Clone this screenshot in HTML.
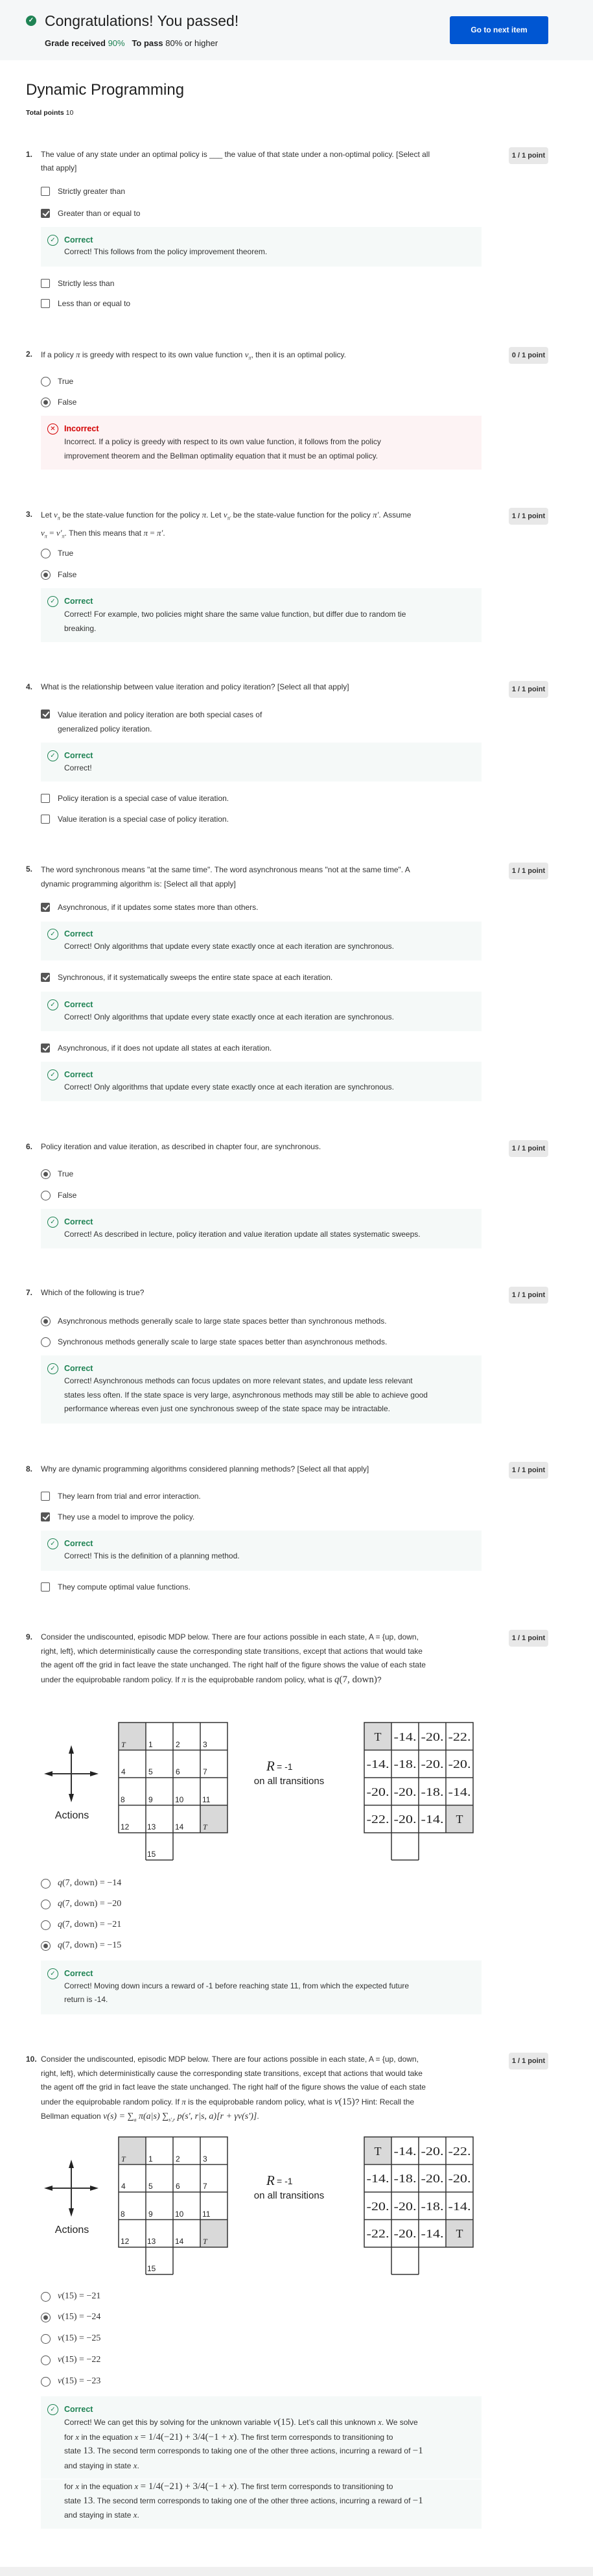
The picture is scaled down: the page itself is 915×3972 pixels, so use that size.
<!DOCTYPE html>
<html><head><meta charset="utf-8">
<style>
*{margin:0;padding:0;box-sizing:border-box}
body{width:915px;height:3972px;position:relative;background:#fff;font-family:"Liberation Sans",sans-serif;color:#333;overflow:hidden}
.a{position:absolute;white-space:nowrap}
.q{position:absolute;left:63px;font-size:12px;line-height:21px;white-space:nowrap;color:#333}
.n{position:absolute;left:40px;font-size:12px;line-height:21px;font-weight:bold;color:#333}
.b{position:absolute;left:785px;width:61px;height:26px;background:#e8e8e8;border-radius:4px;font-size:11px;font-weight:bold;line-height:26px;text-align:center;color:#333}
.o{position:absolute;left:89px;font-size:12px;line-height:20px;white-space:nowrap;color:#333}
.cb{position:absolute;left:63px;width:14px;height:14px;border:1.5px solid #555;border-radius:2px;background:#fff}
.cb.c{background:#555}
.cb.c:after{content:"";position:absolute;left:3.5px;top:0px;width:4px;height:8px;border:solid #fff;border-width:0 2px 2px 0;transform:rotate(40deg)}
.rd{position:absolute;left:63px;width:15px;height:15px;border:1.5px solid #555;border-radius:50%;background:#fff}
.rd.c:after{content:"";position:absolute;left:2.5px;top:2.5px;width:7px;height:7px;border-radius:50%;background:#555}
.fb{position:absolute;left:63px;width:680px;background:#f5f9f8}
.fb.x{background:#fdf3f4}
.ic{position:absolute;left:10px;width:17px;height:17px;border:1.3px solid #1f8354;border-radius:50%;color:#1f8354;font-size:10px;line-height:15px;text-align:center}
.x .ic{border-color:#d30001;color:#d30001}
.ft{position:absolute;left:36px;font-size:12.5px;font-weight:bold;color:#1f8354;line-height:20px}
.x .ft{color:#d30001}
.fx{position:absolute;left:36px;font-size:12px;line-height:21px;white-space:nowrap;color:#333}
.m{font-family:"Liberation Serif",serif;font-style:italic;font-size:13px}
.mr{font-family:"Liberation Serif",serif;font-size:13px}
.om{font-family:"Liberation Serif",serif;font-size:14px}
</style></head><body>

<!-- banner -->
<div class="a" style="left:0;top:0;width:915px;height:93px;background:#f5f7f8"></div>
<div class="a" style="left:40px;top:24px;width:16px;height:16px;border-radius:50%;background:#1f8354;color:#fff;font-size:10px;line-height:16px;text-align:center;font-weight:bold">✓</div>
<div class="a" style="left:69px;top:17px;font-size:23px;line-height:30px;color:#1f1f1f">Congratulations! You passed!</div>
<div class="a" style="left:69px;top:58px;font-size:13px;line-height:18px;color:#1f1f1f"><b>Grade received</b> <span style="color:#1f8354">90%</span> &nbsp; <b>To pass</b> 80% or higher</div>
<div class="a" style="left:694px;top:25px;width:152px;height:43px;background:#0056d2;border-radius:3px;color:#fff;font-size:12px;font-weight:bold;text-align:center;line-height:43px">Go to next item</div>

<div class="a" style="left:40px;top:124px;font-size:24px;line-height:30px;color:#1f1f1f">Dynamic Programming</div>
<div class="a" style="left:40px;top:166px;font-size:10.5px;line-height:16px;color:#1f1f1f"><b>Total points</b> 10</div>

<!-- Q1 -->
<div class="n" style="top:228px">1.</div>
<div class="q" style="top:228px">The value of any state under an optimal policy is ___ the value of that state under a non-optimal policy. [Select all<br>that apply]</div>
<div class="b" style="top:227px">1 / 1 point</div>
<div class="cb" style="top:288px"></div><div class="o" style="top:285px">Strictly greater than</div>
<div class="cb c" style="top:322px"></div><div class="o" style="top:319px">Greater than or equal to</div>
<div class="fb" style="top:350px;height:61px"><div class="ic" style="top:12px">✓</div><div class="ft" style="top:10px">Correct</div><div class="fx" style="top:28px">Correct! This follows from the policy improvement theorem.</div></div>
<div class="cb" style="top:430px"></div><div class="o" style="top:427px">Strictly less than</div>
<div class="cb" style="top:461px"></div><div class="o" style="top:458px">Less than or equal to</div>

<!-- Q2 -->
<div class="n" style="top:536px">2.</div>
<div class="q" style="top:536px">If a policy <span class="m">π</span> is greedy with respect to its own value function <span class="m">v<sub style="font-size:8px">π</sub></span>, then it is an optimal policy.</div>
<div class="b" style="top:535px">0 / 1 point</div>
<div class="rd" style="top:581px"></div><div class="o" style="top:578px">True</div>
<div class="rd c" style="top:613px"></div><div class="o" style="top:610px">False</div>
<div class="fb x" style="top:641px;height:83px"><div class="ic" style="top:12px">✕</div><div class="ft" style="top:10px">Incorrect</div><div class="fx" style="top:29px;line-height:22px">Incorrect. If a policy is greedy with respect to its own value function, it follows from the policy<br>improvement theorem and the Bellman optimality equation that it must be an optimal policy.</div></div>

<!-- Q3 -->
<div class="n" style="top:783px">3.</div>
<div class="q" style="top:783px;line-height:22px">Let <span class="m">v<sub style="font-size:8px">π</sub></span> be the state-value function for the policy <span class="m">π</span>. Let <span class="m">v<sub style="font-size:8px">π'</sub></span> be the state-value function for the policy <span class="m">π'</span>. Assume<br><span class="m">v<sub style="font-size:8px">π</sub></span> <span class="mr">=</span> <span class="m">v'<sub style="font-size:8px">π</sub></span>. Then this means that <span class="m">π</span> <span class="mr">=</span> <span class="m">π'</span>.</div>
<div class="b" style="top:783px">1 / 1 point</div>
<div class="rd" style="top:846px"></div><div class="o" style="top:843px">True</div>
<div class="rd c" style="top:879px"></div><div class="o" style="top:876px">False</div>
<div class="fb" style="top:907px;height:83px"><div class="ic" style="top:12px">✓</div><div class="ft" style="top:10px">Correct</div><div class="fx" style="top:29px;line-height:22px">Correct! For example, two policies might share the same value function, but differ due to random tie<br>breaking.</div></div>

<!-- Q4 -->
<div class="n" style="top:1049px">4.</div>
<div class="q" style="top:1049px">What is the relationship between value iteration and policy iteration? [Select all that apply]</div>
<div class="b" style="top:1050px">1 / 1 point</div>
<div class="cb c" style="top:1094px"></div><div class="o" style="top:1091px;line-height:22px">Value iteration and policy iteration are both special cases of<br>generalized policy iteration.</div>
<div class="fb" style="top:1145px;height:60px"><div class="ic" style="top:12px">✓</div><div class="ft" style="top:10px">Correct</div><div class="fx" style="top:29px">Correct!</div></div>
<div class="cb" style="top:1224px"></div><div class="o" style="top:1221px">Policy iteration is a special case of value iteration.</div>
<div class="cb" style="top:1256px"></div><div class="o" style="top:1253px">Value iteration is a special case of policy iteration.</div>

<!-- Q5 -->
<div class="n" style="top:1330px">5.</div>
<div class="q" style="top:1330px;line-height:22px">The word synchronous means "at the same time". The word asynchronous means "not at the same time". A<br>dynamic programming algorithm is: [Select all that apply]</div>
<div class="b" style="top:1330px">1 / 1 point</div>
<div class="cb c" style="top:1392px"></div><div class="o" style="top:1389px">Asynchronous, if it updates some states more than others.</div>
<div class="fb" style="top:1421px;height:60px"><div class="ic" style="top:11px">✓</div><div class="ft" style="top:9px">Correct</div><div class="fx" style="top:28px">Correct! Only algorithms that update every state exactly once at each iteration are synchronous.</div></div>
<div class="cb c" style="top:1500px"></div><div class="o" style="top:1497px">Synchronous, if it systematically sweeps the entire state space at each iteration.</div>
<div class="fb" style="top:1529px;height:61px"><div class="ic" style="top:12px">✓</div><div class="ft" style="top:10px">Correct</div><div class="fx" style="top:29px">Correct! Only algorithms that update every state exactly once at each iteration are synchronous.</div></div>
<div class="cb c" style="top:1609px"></div><div class="o" style="top:1606px">Asynchronous, if it does not update all states at each iteration.</div>
<div class="fb" style="top:1637px;height:61px"><div class="ic" style="top:12px">✓</div><div class="ft" style="top:10px">Correct</div><div class="fx" style="top:29px">Correct! Only algorithms that update every state exactly once at each iteration are synchronous.</div></div>

<!-- Q6 -->
<div class="n" style="top:1758px">6.</div>
<div class="q" style="top:1758px">Policy iteration and value iteration, as described in chapter four, are synchronous.</div>
<div class="b" style="top:1758px">1 / 1 point</div>
<div class="rd c" style="top:1803px"></div><div class="o" style="top:1800px">True</div>
<div class="rd" style="top:1836px"></div><div class="o" style="top:1833px">False</div>
<div class="fb" style="top:1864px;height:61px"><div class="ic" style="top:12px">✓</div><div class="ft" style="top:10px">Correct</div><div class="fx" style="top:29px">Correct! As described in lecture, policy iteration and value iteration update all states systematic sweeps.</div></div>

<!-- Q7 -->
<div class="n" style="top:1983px">7.</div>
<div class="q" style="top:1983px">Which of the following is true?</div>
<div class="b" style="top:1984px">1 / 1 point</div>
<div class="rd c" style="top:2030px"></div><div class="o" style="top:2027px">Asynchronous methods generally scale to large state spaces better than synchronous methods.</div>
<div class="rd" style="top:2062px"></div><div class="o" style="top:2059px">Synchronous methods generally scale to large state spaces better than asynchronous methods.</div>
<div class="fb" style="top:2090px;height:105px"><div class="ic" style="top:12px">✓</div><div class="ft" style="top:10px">Correct</div><div class="fx" style="top:29px;line-height:21.5px">Correct! Asynchronous methods can focus updates on more relevant states, and update less relevant<br>states less often. If the state space is very large, asynchronous methods may still be able to achieve good<br>performance whereas even just one synchronous sweep of the state space may be intractable.</div></div>

<!-- Q8 -->
<div class="n" style="top:2255px">8.</div>
<div class="q" style="top:2255px">Why are dynamic programming algorithms considered planning methods? [Select all that apply]</div>
<div class="b" style="top:2254px">1 / 1 point</div>
<div class="cb" style="top:2300px"></div><div class="o" style="top:2297px">They learn from trial and error interaction.</div>
<div class="cb c" style="top:2332px"></div><div class="o" style="top:2329px">They use a model to improve the policy.</div>
<div class="fb" style="top:2360px;height:62px"><div class="ic" style="top:12px">✓</div><div class="ft" style="top:10px">Correct</div><div class="fx" style="top:29px">Correct! This is the definition of a planning method.</div></div>
<div class="cb" style="top:2440px"></div><div class="o" style="top:2437px">They compute optimal value functions.</div>

<!-- Q9 -->
<div class="n" style="top:2514px">9.</div>
<div class="q" style="top:2514px;line-height:21.7px">Consider the undiscounted, episodic MDP below. There are four actions possible in each state, A = {up, down,<br>right, left}, which deterministically cause the corresponding state transitions, except that actions that would take<br>the agent off the grid in fact leave the state unchanged. The right half of the figure shows the value of each state<br>under the equiprobable random policy. If <span class="m">π</span> is the equiprobable random policy, what is <span class="m" style="font-size:15px">q</span><span class="mr" style="font-size:15px">(7, down)</span>?</div>
<div class="b" style="top:2513px">1 / 1 point</div>

<svg class="a" style="left:0;top:2596px" width="915" height="280" viewBox="0 0 915 280">
<g stroke="#333" fill="none" stroke-width="1.5">
<rect x="183" y="60" width="42" height="42.5" fill="#d9d9d9" stroke="none"/>
<rect x="309" y="187.5" width="42" height="42.5" fill="#d9d9d9" stroke="none"/>
<rect x="183" y="60" width="168" height="170"/>
<line x1="225" y1="60" x2="225" y2="272"/><line x1="267" y1="60" x2="267" y2="272"/><line x1="309" y1="60" x2="309" y2="230"/>
<line x1="183" y1="102.5" x2="351" y2="102.5"/><line x1="183" y1="145" x2="351" y2="145"/><line x1="183" y1="187.5" x2="351" y2="187.5"/>
<line x1="225" y1="272" x2="267" y2="272"/>
<rect x="562" y="60" width="42" height="42.5" fill="#d9d9d9" stroke="none"/>
<rect x="688" y="187.5" width="42" height="42.5" fill="#d9d9d9" stroke="none"/>
<rect x="562" y="60" width="168" height="170"/>
<line x1="604" y1="60" x2="604" y2="272"/><line x1="646" y1="60" x2="646" y2="272"/><line x1="688" y1="60" x2="688" y2="230"/>
<line x1="562" y1="102.5" x2="730" y2="102.5"/><line x1="562" y1="145" x2="730" y2="145"/><line x1="562" y1="187.5" x2="730" y2="187.5"/>
<line x1="604" y1="272" x2="646" y2="272"/>
<line x1="110" y1="104" x2="110" y2="174" stroke-width="2"/><line x1="77" y1="139" x2="143" y2="139" stroke-width="2"/>
</g>
<g fill="#222"><polygon points="110,95 106,108 114,108"/><polygon points="110,183 106,170 114,170"/><polygon points="68,139 81,135 81,143"/><polygon points="152,139 139,135 139,143"/></g>
<g font-family="Liberation Sans,sans-serif" font-size="12" fill="#222">
<text x="187" y="98" font-family="Liberation Serif,serif" font-style="italic">T</text><text x="229" y="98">1</text><text x="271" y="98">2</text><text x="313" y="98">3</text>
<text x="187" y="140">4</text><text x="229" y="140">5</text><text x="271" y="140">6</text><text x="313" y="140">7</text>
<text x="186" y="183">8</text><text x="229" y="183">9</text><text x="270" y="183">10</text><text x="312" y="183">11</text>
<text x="186" y="225">12</text><text x="227" y="225">13</text><text x="270" y="225">14</text><text x="313" y="225" font-family="Liberation Serif,serif" font-style="italic">T</text>
<text x="227" y="267">15</text>
<text x="111" y="208" font-size="16" text-anchor="middle">Actions</text>
<text x="411" y="134" font-size="21" font-family="Liberation Serif,serif" font-style="italic">R</text><text x="427" y="133" font-size="14">= -1</text>
<text x="446" y="155" font-size="15" text-anchor="middle">on all transitions</text>
</g>
<g font-family="Liberation Serif,serif" font-size="18" fill="#222" text-anchor="middle">
<text x="583" y="88">T</text><text x="625" y="88" textLength="35" lengthAdjust="spacingAndGlyphs">-14.</text><text x="667" y="88" textLength="35" lengthAdjust="spacingAndGlyphs">-20.</text><text x="709" y="88" textLength="35" lengthAdjust="spacingAndGlyphs">-22.</text>
<text x="583" y="130" textLength="35" lengthAdjust="spacingAndGlyphs">-14.</text><text x="625" y="130" textLength="35" lengthAdjust="spacingAndGlyphs">-18.</text><text x="667" y="130" textLength="35" lengthAdjust="spacingAndGlyphs">-20.</text><text x="709" y="130" textLength="35" lengthAdjust="spacingAndGlyphs">-20.</text>
<text x="583" y="173" textLength="35" lengthAdjust="spacingAndGlyphs">-20.</text><text x="625" y="173" textLength="35" lengthAdjust="spacingAndGlyphs">-20.</text><text x="667" y="173" textLength="35" lengthAdjust="spacingAndGlyphs">-18.</text><text x="709" y="173" textLength="35" lengthAdjust="spacingAndGlyphs">-14.</text>
<text x="583" y="215" textLength="35" lengthAdjust="spacingAndGlyphs">-22.</text><text x="625" y="215" textLength="35" lengthAdjust="spacingAndGlyphs">-20.</text><text x="667" y="215" textLength="35" lengthAdjust="spacingAndGlyphs">-14.</text><text x="709" y="215">T</text>
</g>
</svg>

<div class="rd" style="top:2897px"></div><div class="o om" style="top:2894px"><i>q</i>(7, down) = −14</div>
<div class="rd" style="top:2929px"></div><div class="o om" style="top:2926px"><i>q</i>(7, down) = −20</div>
<div class="rd" style="top:2961px"></div><div class="o om" style="top:2958px"><i>q</i>(7, down) = −21</div>
<div class="rd c" style="top:2993px"></div><div class="o om" style="top:2990px"><i>q</i>(7, down) = −15</div>
<div class="fb" style="top:3023px;height:83px"><div class="ic" style="top:12px">✓</div><div class="ft" style="top:10px">Correct</div><div class="fx" style="top:29px">Correct! Moving down incurs a reward of -1 before reaching state 11, from which the expected future<br>return is -14.</div></div>

<!-- Q10 -->
<div class="n" style="top:3165px">10.</div>
<div class="q" style="top:3165px;line-height:21.7px">Consider the undiscounted, episodic MDP below. There are four actions possible in each state, A = {up, down,<br>right, left}, which deterministically cause the corresponding state transitions, except that actions that would take<br>the agent off the grid in fact leave the state unchanged. The right half of the figure shows the value of each state<br>under the equiprobable random policy. If <span class="m">π</span> is the equiprobable random policy, what is <span class="m" style="font-size:15px">v</span><span class="mr" style="font-size:15px">(15)</span>? Hint: Recall the<br>Bellman equation <span class="m" style="font-size:14px">v(s) = ∑<sub style="font-size:8px">a</sub> π(a|s) ∑<sub style="font-size:8px">s',r</sub> p(s', r|s, a)[r + γv(s')]</span>.</div>
<div class="b" style="top:3165px">1 / 1 point</div>

<svg class="a" style="left:0;top:3235px" width="915" height="280" viewBox="0 0 915 280">
<g stroke="#333" fill="none" stroke-width="1.5">
<rect x="183" y="60" width="42" height="42.5" fill="#d9d9d9" stroke="none"/>
<rect x="309" y="187.5" width="42" height="42.5" fill="#d9d9d9" stroke="none"/>
<rect x="183" y="60" width="168" height="170"/>
<line x1="225" y1="60" x2="225" y2="272"/><line x1="267" y1="60" x2="267" y2="272"/><line x1="309" y1="60" x2="309" y2="230"/>
<line x1="183" y1="102.5" x2="351" y2="102.5"/><line x1="183" y1="145" x2="351" y2="145"/><line x1="183" y1="187.5" x2="351" y2="187.5"/>
<line x1="225" y1="272" x2="267" y2="272"/>
<rect x="562" y="60" width="42" height="42.5" fill="#d9d9d9" stroke="none"/>
<rect x="688" y="187.5" width="42" height="42.5" fill="#d9d9d9" stroke="none"/>
<rect x="562" y="60" width="168" height="170"/>
<line x1="604" y1="60" x2="604" y2="272"/><line x1="646" y1="60" x2="646" y2="272"/><line x1="688" y1="60" x2="688" y2="230"/>
<line x1="562" y1="102.5" x2="730" y2="102.5"/><line x1="562" y1="145" x2="730" y2="145"/><line x1="562" y1="187.5" x2="730" y2="187.5"/>
<line x1="604" y1="272" x2="646" y2="272"/>
<line x1="110" y1="104" x2="110" y2="174" stroke-width="2"/><line x1="77" y1="139" x2="143" y2="139" stroke-width="2"/>
</g>
<g fill="#222"><polygon points="110,95 106,108 114,108"/><polygon points="110,183 106,170 114,170"/><polygon points="68,139 81,135 81,143"/><polygon points="152,139 139,135 139,143"/></g>
<g font-family="Liberation Sans,sans-serif" font-size="12" fill="#222">
<text x="187" y="98" font-family="Liberation Serif,serif" font-style="italic">T</text><text x="229" y="98">1</text><text x="271" y="98">2</text><text x="313" y="98">3</text>
<text x="187" y="140">4</text><text x="229" y="140">5</text><text x="271" y="140">6</text><text x="313" y="140">7</text>
<text x="186" y="183">8</text><text x="229" y="183">9</text><text x="270" y="183">10</text><text x="312" y="183">11</text>
<text x="186" y="225">12</text><text x="227" y="225">13</text><text x="270" y="225">14</text><text x="313" y="225" font-family="Liberation Serif,serif" font-style="italic">T</text>
<text x="227" y="267">15</text>
<text x="111" y="208" font-size="16" text-anchor="middle">Actions</text>
<text x="411" y="134" font-size="21" font-family="Liberation Serif,serif" font-style="italic">R</text><text x="427" y="133" font-size="14">= -1</text>
<text x="446" y="155" font-size="15" text-anchor="middle">on all transitions</text>
</g>
<g font-family="Liberation Serif,serif" font-size="18" fill="#222" text-anchor="middle">
<text x="583" y="88">T</text><text x="625" y="88" textLength="35" lengthAdjust="spacingAndGlyphs">-14.</text><text x="667" y="88" textLength="35" lengthAdjust="spacingAndGlyphs">-20.</text><text x="709" y="88" textLength="35" lengthAdjust="spacingAndGlyphs">-22.</text>
<text x="583" y="130" textLength="35" lengthAdjust="spacingAndGlyphs">-14.</text><text x="625" y="130" textLength="35" lengthAdjust="spacingAndGlyphs">-18.</text><text x="667" y="130" textLength="35" lengthAdjust="spacingAndGlyphs">-20.</text><text x="709" y="130" textLength="35" lengthAdjust="spacingAndGlyphs">-20.</text>
<text x="583" y="173" textLength="35" lengthAdjust="spacingAndGlyphs">-20.</text><text x="625" y="173" textLength="35" lengthAdjust="spacingAndGlyphs">-20.</text><text x="667" y="173" textLength="35" lengthAdjust="spacingAndGlyphs">-18.</text><text x="709" y="173" textLength="35" lengthAdjust="spacingAndGlyphs">-14.</text>
<text x="583" y="215" textLength="35" lengthAdjust="spacingAndGlyphs">-22.</text><text x="625" y="215" textLength="35" lengthAdjust="spacingAndGlyphs">-20.</text><text x="667" y="215" textLength="35" lengthAdjust="spacingAndGlyphs">-14.</text><text x="709" y="215">T</text>
</g>
</svg>

<div class="rd" style="top:3534px"></div><div class="o om" style="top:3531px"><i>v</i>(15) = −21</div>
<div class="rd c" style="top:3566px"></div><div class="o om" style="top:3563px"><i>v</i>(15) = −24</div>
<div class="rd" style="top:3599px"></div><div class="o om" style="top:3596px"><i>v</i>(15) = −25</div>
<div class="rd" style="top:3632px"></div><div class="o om" style="top:3629px"><i>v</i>(15) = −22</div>
<div class="rd" style="top:3665px"></div><div class="o om" style="top:3662px"><i>v</i>(15) = −23</div>
<div class="fb" style="top:3695px;height:204px">
<div class="ic" style="top:12px">✓</div><div class="ft" style="top:10px">Correct</div>
<div class="fx" style="top:29px;line-height:21.7px">Correct! We can get this by solving for the unknown variable <span class="mr" style="font-size:15px"><i>v</i>(15)</span>. Let’s call this unknown <span class="m">x</span>. We solve<br>for <span class="m">x</span> in the equation <span class="m">x</span> <span class="mr" style="font-size:15px">= 1/4(−21) + 3/4(−1 + <i>x</i>)</span>. The first term corresponds to transitioning to<br>state <span class="mr" style="font-size:15px">13</span>. The second term corresponds to taking one of the other three actions, incurring a reward of <span class="mr" style="font-size:15px">−1</span><br>and staying in state <span class="m">x</span>.</div>
<div class="a" style="left:0;top:127px;width:680px;height:1px;background:#fff"></div>
<div class="fx" style="top:128px;line-height:21.7px">for <span class="m">x</span> in the equation <span class="m">x</span> <span class="mr" style="font-size:15px">= 1/4(−21) + 3/4(−1 + <i>x</i>)</span>. The first term corresponds to transitioning to<br>state <span class="mr" style="font-size:15px">13</span>. The second term corresponds to taking one of the other three actions, incurring a reward of <span class="mr" style="font-size:15px">−1</span><br>and staying in state <span class="m">x</span>.</div>
</div>

<div class="a" style="left:0;top:3958px;width:915px;height:14px;background:#f0f0f0"></div>
</body></html>
